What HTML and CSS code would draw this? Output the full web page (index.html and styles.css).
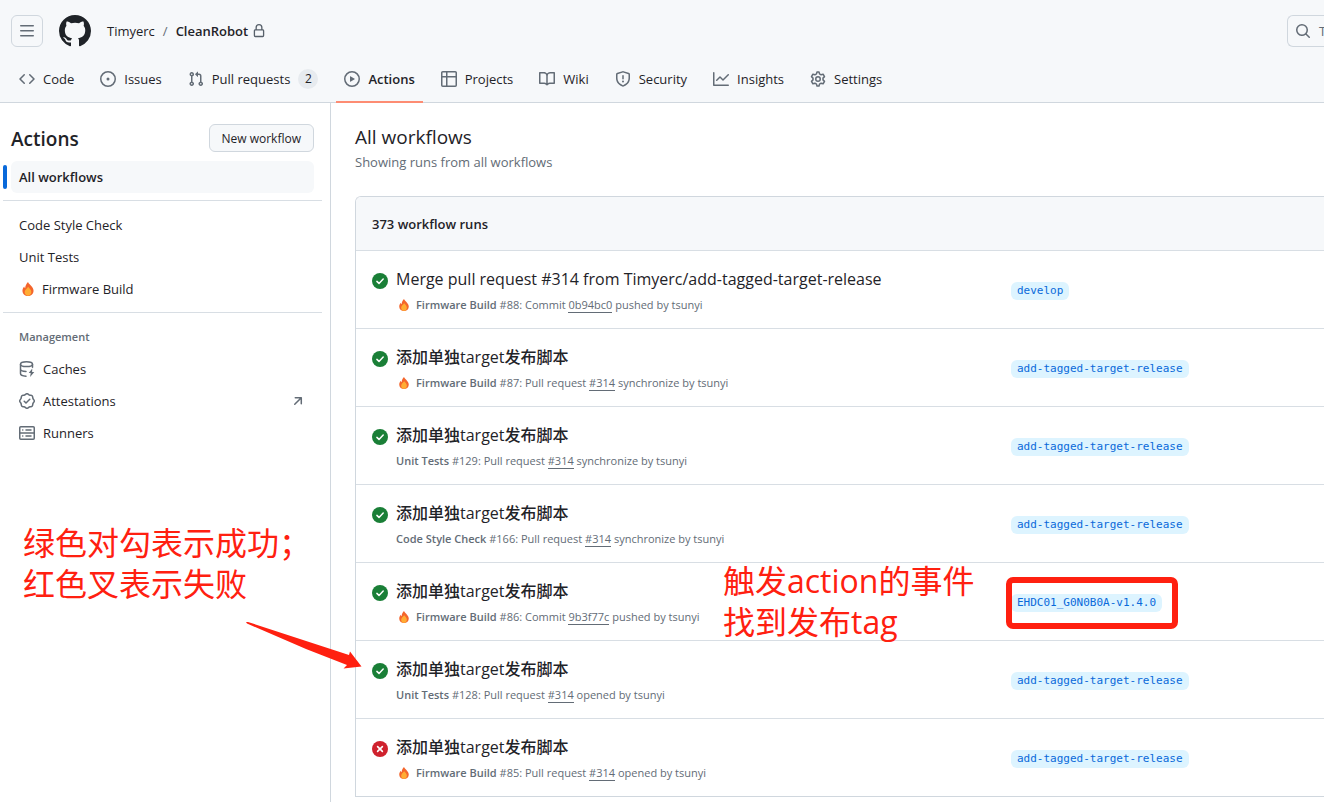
FILE: index.html
```html
<!DOCTYPE html>
<html lang="en">
<head>
<meta charset="utf-8">
<title>Actions · Timyerc/CleanRobot</title>
<link rel="stylesheet" href="styles.css">
</head>
<body>
<svg class="defs" aria-hidden="true">
  <symbol id="i-fire" viewBox="0 0 16 16"><path fill="#f4652c" d="M8 0c.6 2 3 3.200 4.500 5.500C14 7.600 14.500 9 14.300 10.500 14 13.700 11.400 16 8 16s-6-2.300-6.300-5.500C1.500 8.500 2.300 6.500 3.700 5c.1 1 .4 1.600 1 2C5 4 6.300 1.700 8 0z"/><path fill="#ffac33" d="M8.200 5.500c.8 1.500 3.600 3 3.600 6 0 2.400-1.600 4.200-3.800 4.200s-3.800-1.800-3.800-4.200c0-2.500 2.800-4 4-6z"/></symbol>
  <symbol id="i-ok" viewBox="0 0 16 16"><circle cx="8" cy="8" r="8" fill="#1a7f37"/><path d="M4.900 8.400 7 10.400 11.200 6.100" fill="none" stroke="#fff" stroke-width="1.500" stroke-linecap="round" stroke-linejoin="round"/></symbol>
  <symbol id="i-fail" viewBox="0 0 16 16"><circle cx="8" cy="8" r="8" fill="#cf222e"/><path d="m5.600 5.600 4.800 4.800m0-4.800-4.800 4.800" fill="none" stroke="#fff" stroke-width="1.600" stroke-linecap="round"/></symbol>
</svg>

<header class="header">
  <div class="topbar">
    <button class="menu" aria-label="Open menu"><svg class="icon" viewBox="0 0 16 16"><path d="M1 2.750A.75.75 0 0 1 1.750 2h12.500a.75.75 0 0 1 0 1.500H1.750A.75.75 0 0 1 1 2.750Zm0 5A.75.75 0 0 1 1.750 7h12.500a.75.75 0 0 1 0 1.500H1.750A.75.75 0 0 1 1 7.750ZM1.750 12h12.500a.75.75 0 0 1 0 1.500H1.750a.75.75 0 0 1 0-1.500Z"/></svg></button>
    <a class="logo" href="#" aria-label="Homepage"><svg viewBox="0 0 16 16" width="32" height="32"><path d="M8 0c4.420 0 8 3.580 8 8a8.013 8.013 0 0 1-5.450 7.590c-.4.080-.55-.17-.55-.38 0-.27.010-1.130.010-2.200 0-.75-.25-1.230-.54-1.480 1.780-.2 3.650-.88 3.650-3.950 0-.88-.31-1.590-.82-2.150.080-.2.360-1.020-.080-2.120 0 0-.67-.22-2.200.82-.64-.18-1.320-.27-2-.27-.68 0-1.360.090-2 .27-1.530-1.030-2.200-.82-2.200-.82-.44 1.100-.16 1.920-.080 2.120-.51.560-.82 1.280-.82 2.150 0 3.060 1.860 3.750 3.640 3.950-.23.2-.44.550-.51 1.070-.46.210-1.610.550-2.330-.66-.15-.24-.6-.83-1.230-.82-.67.010-.27.380.010.530.34.190.73.900.82 1.130.16.450.68 1.310 2.690.94 0 .67.010 1.300.010 1.490 0 .21-.15.450-.55.380A7.995 7.995 0 0 1 0 8c0-4.420 3.580-8 8-8Z"/></svg></a>
    <nav class="crumbs" aria-label="Repository"><a href="#">Timyerc</a><span class="slash">/</span><a class="repo" href="#">CleanRobot</a><svg class="lock" viewBox="0 0 16 16"><path d="M4 4a4 4 0 0 1 8 0v2h.25c.966 0 1.750.784 1.750 1.750v5.500A1.750 1.750 0 0 1 12.250 15h-8.500A1.750 1.750 0 0 1 2 13.250v-5.500C2 6.784 2.784 6 3.750 6H4Zm8.250 3.500h-8.500a.25.25 0 0 0-.25.25v5.500c0 .138.112.25.25.25h8.500a.25.25 0 0 0 .25-.25v-5.500a.25.25 0 0 0-.25-.25ZM10.500 6V4a2.500 2.500 0 1 0-5 0v2Z"/></svg></nav>
    <button class="search" aria-label="Search"><svg class="icon" viewBox="0 0 16 16"><path d="M10.680 11.740a6 6 0 0 1-7.922-8.982 6 6 0 0 1 8.982 7.922l3.040 3.040a.749.749 0 0 1-1.060 1.060ZM11.500 7a4.499 4.499 0 1 0-8.997 0A4.499 4.499 0 0 0 11.500 7Z"/></svg><span>T</span></button>
  </div>
  <nav class="tabs" aria-label="Repository sections">
    <a class="tab" href="#"><svg class="icon" viewBox="0 0 16 16"><path d="m11.280 3.220 4.250 4.250a.75.75 0 0 1 0 1.060l-4.250 4.250a.749.749 0 1 1-1.060-1.060L13.940 8l-3.720-3.720a.749.749 0 1 1 1.060-1.060Zm-6.560 0a.751.751 0 0 1 1.060 1.060L2.060 8l3.720 3.720a.749.749 0 1 1-1.060 1.060L.47 8.530a.75.75 0 0 1 0-1.060Z"/></svg>Code</a>
    <a class="tab" href="#"><svg class="icon" viewBox="0 0 16 16"><path d="M8 9.500a1.500 1.500 0 1 0 0-3 1.500 1.500 0 0 0 0 3Z"/><path d="M8 0a8 8 0 1 1 0 16A8 8 0 0 1 8 0ZM1.500 8a6.500 6.500 0 1 0 13 0 6.500 6.500 0 0 0-13 0Z"/></svg>Issues</a>
    <a class="tab" href="#"><svg class="icon" viewBox="0 0 16 16"><path d="M1.500 3.250a2.250 2.250 0 1 1 3 2.122v5.256a2.251 2.251 0 1 1-1.500 0V5.372A2.250 2.250 0 0 1 1.500 3.250Zm5.677-.177L9.573.677A.25.25 0 0 1 10 .854V2.500h1A2.500 2.500 0 0 1 13.500 5v5.628a2.251 2.251 0 1 1-1.500 0V5a1 1 0 0 0-1-1h-1v1.646a.25.25 0 0 1-.427.177L7.177 3.427a.25.25 0 0 1 0-.354ZM3.750 2.500a.75.75 0 1 0 0 1.500.75.75 0 0 0 0-1.500Zm0 9.500a.75.75 0 1 0 0 1.500.75.75 0 0 0 0-1.500Zm8.250.75a.75.75 0 1 0 1.500 0 .75.75 0 0 0-1.500 0Z"/></svg>Pull requests<span class="count">2</span></a>
    <a class="tab tab-active" href="#" aria-current="page"><svg class="icon" viewBox="0 0 16 16"><path d="M8 0a8 8 0 1 1 0 16A8 8 0 0 1 8 0ZM1.500 8a6.500 6.500 0 1 0 13 0 6.500 6.500 0 0 0-13 0Zm4.879-2.773 4.264 2.559a.25.25 0 0 1 0 .428l-4.264 2.559A.25.25 0 0 1 6 10.559V5.442a.25.25 0 0 1 .379-.215Z"/></svg>Actions</a>
    <a class="tab" href="#"><svg class="icon" viewBox="0 0 16 16"><path d="M0 1.750C0 .784.784 0 1.750 0h12.500C15.216 0 16 .784 16 1.750v12.500A1.750 1.750 0 0 1 14.250 16H1.750A1.750 1.750 0 0 1 0 14.250ZM6.500 6.500v8h7.750a.25.25 0 0 0 .25-.25V6.500Zm8-1.500V1.750a.25.25 0 0 0-.25-.25H6.500V5Zm-13 1.500v7.750c0 .138.112.25.25.25H5v-8ZM5 5V1.500H1.750a.25.25 0 0 0-.25.25V5Z"/></svg>Projects</a>
    <a class="tab" href="#"><svg class="icon" viewBox="0 0 16 16"><path d="M0 1.750A.75.75 0 0 1 .75 1h4.253c1.227 0 2.317.59 3 1.501A3.743 3.743 0 0 1 11.006 1h4.245a.75.75 0 0 1 .75.75v10.500a.75.75 0 0 1-.75.75h-4.507a2.250 2.250 0 0 0-1.591.659l-.622.621a.75.75 0 0 1-1.060 0l-.622-.621A2.250 2.250 0 0 0 5.258 13H.75a.75.75 0 0 1-.75-.75Zm7.251 10.324.004-5.073-.002-2.253A2.250 2.250 0 0 0 5.003 2.500H1.500v9h3.757a3.750 3.750 0 0 1 1.994.574ZM8.755 4.750l-.004 7.322a3.752 3.752 0 0 1 1.992-.572H14.500v-9h-3.495a2.250 2.250 0 0 0-2.250 2.250Z"/></svg>Wiki</a>
    <a class="tab" href="#"><svg class="icon" viewBox="0 0 16 16"><path d="M7.467.133a1.748 1.748 0 0 1 1.066 0l5.250 1.680A1.750 1.750 0 0 1 15 3.480V7c0 1.566-.32 3.182-1.303 4.682-.983 1.498-2.585 2.813-5.032 3.855a1.697 1.697 0 0 1-1.330 0c-2.447-1.042-4.049-2.357-5.032-3.855C1.320 10.182 1 8.566 1 7V3.480a1.755 1.755 0 0 1 1.217-1.667Zm.610 1.429a.25.25 0 0 0-.153 0l-5.250 1.680a.25.25 0 0 0-.174.238V7c0 1.358.275 2.666 1.057 3.860.784 1.194 2.121 2.340 4.366 3.297a.196.196 0 0 0 .154 0c2.245-.956 3.582-2.104 4.366-3.298C13.225 9.666 13.500 8.360 13.500 7V3.480a.251.251 0 0 0-.174-.237l-5.250-1.680ZM8.750 4.750v3a.75.75 0 0 1-1.500 0v-3a.75.75 0 0 1 1.500 0ZM9 10.500a1 1 0 1 1-2 0 1 1 0 0 1 2 0Z"/></svg>Security</a>
    <a class="tab" href="#"><svg class="icon" viewBox="0 0 16 16"><path d="M1.500 1.750V13.500h13.750a.75.75 0 0 1 0 1.500H.75a.75.75 0 0 1-.75-.75V1.750a.75.75 0 0 1 1.500 0Zm14.280 2.530-5.250 5.250a.75.75 0 0 1-1.060 0L7 7.060 4.280 9.780a.751.751 0 1 1-1.060-1.060l3.250-3.250a.75.75 0 0 1 1.060 0L10 7.940l4.720-4.720a.751.751 0 1 1 1.060 1.060Z"/></svg>Insights</a>
    <a class="tab" href="#"><svg class="icon" viewBox="0 0 16 16"><g fill="none" stroke="#636c76" stroke-width="1.500" stroke-linejoin="round"><circle cx="8" cy="8" r="2.250"/><path d="M7 .9h2l.5 2 1.600.9 2-.6 1.400 2.400-1.500 1.500v1.800l1.500 1.500-1.400 2.400-2-.6-1.600.9-.5 2H7l-.5-2-1.600-.9-2 .6-1.400-2.400L3 8.900V7.100L1.500 5.600l1.400-2.400 2 .6 1.600-.9z"/></g></svg>Settings</a>
  </nav>
</header>

<div class="layout">
  <aside class="sidebar">
    <div class="side-head"><h2>Actions</h2><button class="new">New workflow</button></div>
    <nav class="side-nav" aria-label="Workflows">
      <a class="item item-active" href="#" aria-current="page">All workflows</a>
      <hr>
      <a class="item" href="#">Code Style Check</a>
      <a class="item" href="#">Unit Tests</a>
      <a class="item" href="#"><svg class="fire fire-side"><use href="#i-fire"/></svg>Firmware Build</a>
      <hr>
      <h3>Management</h3>
      <a class="item" href="#"><svg class="icon" viewBox="0 0 16 16"><g fill="none" stroke="#636c76" stroke-width="1.500" stroke-linecap="round"><ellipse cx="7.500" cy="3.200" rx="6" ry="2.400"/><path d="M1.500 3.500v9c0 1.300 2 2.500 5.500 2.700M13.500 3.500v2.700M1.500 8c0 1.300 2 2.300 5.500 2.400"/></g><path d="M13.300 7.600 9.700 12h2l-.6 4 4.200-5h-2.200z"/></svg>Caches</a>
      <a class="item" href="#"><svg class="icon" viewBox="0 0 16 16"><path d="m9.585.52.929.68c.153.112.331.186.518.215l1.138.175a2.678 2.678 0 0 1 2.240 2.240l.174 1.139c.29.187.103.365.215.518l.68.928a2.677 2.677 0 0 1 0 3.170l-.68.928a1.174 1.174 0 0 0-.215.518l-.175 1.138a2.678 2.678 0 0 1-2.241 2.241l-1.138.175a1.170 1.170 0 0 0-.518.215l-.928.680a2.677 2.677 0 0 1-3.170 0l-.928-.68a1.174 1.174 0 0 0-.518-.215L3.830 14.410a2.678 2.678 0 0 1-2.240-2.240l-.175-1.138a1.170 1.170 0 0 0-.215-.518l-.68-.928a2.677 2.677 0 0 1 0-3.170l.68-.928c.112-.153.186-.331.215-.518l.175-1.140a2.678 2.678 0 0 1 2.240-2.240l1.139-.175c.187-.29.365-.103.518-.215l.928-.68a2.677 2.677 0 0 1 3.170 0ZM7.303 1.728l-.927.680a2.670 2.670 0 0 1-1.180.489l-1.137.174a1.179 1.179 0 0 0-.987.987l-.174 1.136a2.677 2.677 0 0 1-.489 1.180l-.68.928a1.180 1.180 0 0 0 0 1.394l.68.927c.256.348.424.753.489 1.180l.174 1.137c.078.509.478.909.987.987l1.136.174a2.670 2.670 0 0 1 1.180.489l.928.680c.414.305.979.305 1.394 0l.927-.68a2.670 2.670 0 0 1 1.180-.489l1.137-.174a1.180 1.180 0 0 0 .987-.987l.174-1.136a2.670 2.670 0 0 1 .489-1.180l.680-.928a1.176 1.176 0 0 0 0-1.394l-.68-.927a2.686 2.686 0 0 1-.489-1.180l-.174-1.137a1.179 1.179 0 0 0-.987-.987l-1.136-.174a2.677 2.677 0 0 1-1.180-.489l-.928-.68a1.176 1.176 0 0 0-1.394 0ZM11.280 6.780l-3.750 3.750a.75.75 0 0 1-1.060 0L4.720 8.780a.751.751 0 1 1 1.060-1.060L7 8.940l3.220-3.220a.751.751 0 1 1 1.060 1.060Z"/></svg>Attestations<svg class="icon ext" viewBox="0 0 16 16"><path d="M4.530 4.750A.75.75 0 0 1 5.280 4h6.010a.75.75 0 0 1 .75.75v6.010a.75.75 0 0 1-1.500 0v-4.200l-5.260 5.261a.749.749 0 1 1-1.060-1.060L9.480 5.500h-4.200a.75.75 0 0 1-.75-.75Z"/></svg></a>
      <a class="item" href="#"><svg class="icon" viewBox="0 0 16 16"><g fill="none" stroke="#636c76" stroke-width="1.500" stroke-linecap="round"><rect x=".75" y="1.750" width="14.500" height="12.500" rx="1"/><path d="M.75 8h14.500M3.700 5h.1M3.700 11h.1M7 5h5M7 11h5"/></g></svg>Runners</a>
    </nav>
  </aside>

  <main class="main">
    <h1>All workflows</h1>
    <p class="lead">Showing runs from all workflows</p>
    <section class="panel">
      <div class="panel-head">373 workflow runs</div>
      <article class="run"><svg class="status" role="img" aria-label="Success"><use href="#i-ok"/></svg><div><a class="title" href="#">Merge pull request #314 from Timyerc/add-tagged-target-release</a><p class="meta"><svg class="fire"><use href="#i-fire"/></svg><span><b>Firmware Build</b> #88: Commit <a href="#">0b94bc0</a> pushed by tsunyi</span></p></div><div class="branch"><a href="#">develop</a></div></article>
      <article class="run"><svg class="status" role="img" aria-label="Success"><use href="#i-ok"/></svg><div><a class="title" href="#">添加单独target发布脚本</a><p class="meta"><svg class="fire"><use href="#i-fire"/></svg><span><b>Firmware Build</b> #87: Pull request <a href="#">#314</a> synchronize by tsunyi</span></p></div><div class="branch"><a href="#">add-tagged-target-release</a></div></article>
      <article class="run"><svg class="status" role="img" aria-label="Success"><use href="#i-ok"/></svg><div><a class="title" href="#">添加单独target发布脚本</a><p class="meta"><span><b>Unit Tests</b> #129: Pull request <a href="#">#314</a> synchronize by tsunyi</span></p></div><div class="branch"><a href="#">add-tagged-target-release</a></div></article>
      <article class="run"><svg class="status" role="img" aria-label="Success"><use href="#i-ok"/></svg><div><a class="title" href="#">添加单独target发布脚本</a><p class="meta"><span><b>Code Style Check</b> #166: Pull request <a href="#">#314</a> synchronize by tsunyi</span></p></div><div class="branch"><a href="#">add-tagged-target-release</a></div></article>
      <article class="run"><svg class="status" role="img" aria-label="Success"><use href="#i-ok"/></svg><div><a class="title" href="#">添加单独target发布脚本</a><p class="meta"><svg class="fire"><use href="#i-fire"/></svg><span><b>Firmware Build</b> #86: Commit <a href="#">9b3f77c</a> pushed by tsunyi</span></p></div><div class="branch"><a href="#">EHDC01_G0N0B0A-v1.4.0</a></div></article>
      <article class="run"><svg class="status" role="img" aria-label="Success"><use href="#i-ok"/></svg><div><a class="title" href="#">添加单独target发布脚本</a><p class="meta"><span><b>Unit Tests</b> #128: Pull request <a href="#">#314</a> opened by tsunyi</span></p></div><div class="branch"><a href="#">add-tagged-target-release</a></div></article>
      <article class="run"><svg class="status" role="img" aria-label="Failed"><use href="#i-fail"/></svg><div><a class="title" href="#">添加单独target发布脚本</a><p class="meta"><svg class="fire"><use href="#i-fire"/></svg><span><b>Firmware Build</b> #85: Pull request <a href="#">#314</a> opened by tsunyi</span></p></div><div class="branch"><a href="#">add-tagged-target-release</a></div></article>
    </section>
  </main>
</div>

<div class="note note-status" lang="zh-CN">绿色对勾表示成功；<br>红色叉表示失败</div>
<div class="note note-event" lang="zh-CN">触发action的事件<br>找到发布tag</div>
<svg class="arrow" viewBox="0 0 116 50" aria-hidden="true"><path fill="#ff2010" d="M0 0 2 0 103 33 104 29.500 115.500 44.500 97.500 46.500 101 43 60 27 1 1.500z"/></svg>
<div class="frame"></div>
</body>
</html>
```

FILE: styles.css
```css
* { box-sizing: border-box; }
body {
  margin: 0;
  min-height: 100vh;
  display: flex;
  flex-direction: column;
  position: relative;
  overflow-x: hidden;
  background: #fff;
  color: #1f2328;
  font: 13px/20px "Open Sans", "Noto Sans CJK SC", sans-serif;
}
h1, h2, h3, p { margin: 0; }
a { color: inherit; text-decoration: none; }
button { font: inherit; color: inherit; cursor: pointer; }
.defs { position: absolute; width: 0; height: 0; }
.icon { width: 16px; height: 16px; flex: none; fill: #636c76; }

.header { background: #f6f8fa; border-bottom: 1px solid #d0d7de; }
.topbar { display: flex; align-items: center; padding: 15px 0 8px 11px; }
.menu {
  display: grid;
  place-items: center;
  width: 32px;
  height: 32px;
  padding: 0;
  margin-right: 16px;
  border: 1px solid #d0d7de;
  border-radius: 6px;
  background: none;
}
.logo { display: flex; fill: #1f2328; }
.crumbs { display: flex; align-items: center; margin-left: 16px; }
.slash { padding: 0 8px; color: #636c76; }
.repo { font-weight: 600; }
.lock { width: 14px; height: 14px; margin-left: 4px; fill: #57606a; }
.search {
  display: flex;
  align-items: center;
  gap: 8px;
  width: 37px;
  height: 32px;
  margin-left: auto;
  padding: 0 0 0 7px;
  overflow: hidden;
  border: 1px solid #d0d7de;
  border-right: 0;
  border-radius: 6px 0 0 6px;
  background: none;
  color: #636c76;
}
.tabs { display: flex; gap: 10px; padding-left: 11px; }
.tab {
  display: flex;
  align-items: center;
  gap: 8px;
  height: 48px;
  padding: 2px 8px 0;
  margin-bottom: -1px;
  border-bottom: 2px solid transparent;
}
.tab-active { border-color: #fd8c73; font-weight: 600; }
.count {
  min-width: 20px;
  padding: 0 6px;
  border-radius: 10px;
  background: #e7ebef;
  font-size: 12px;
  text-align: center;
}

.layout { display: flex; flex: 1; }
.sidebar { flex: none; width: 331px; padding: 21px 16px 0 11px; border-right: 1px solid #d0d7de; }
.side-head { display: flex; align-items: center; justify-content: space-between; margin-bottom: 9px; }
.side-head h2 { padding-top: 2px; font-size: 19px; line-height: 26px; font-weight: 600; }
.new {
  height: 28px;
  padding: 1px 12px 0;
  border: 1px solid #d0d7de;
  border-radius: 6px;
  background: #f6f8fa;
  font-size: 12px;
  font-weight: 500;
}
.side-nav { display: flex; flex-direction: column; }
.item {
  position: relative;
  display: flex;
  align-items: center;
  gap: 8px;
  height: 32px;
  padding: 0 8px;
  border-radius: 6px;
}
.item-active { background: #f6f8fa; font-weight: 600; }
.item-active::before {
  content: "";
  position: absolute;
  left: -8px;
  top: 4px;
  width: 4px;
  height: 24px;
  border-radius: 6px;
  background: #0969da;
}
.side-nav hr { width: auto; height: 1px; margin: 7px -8px 8px; border: 0; background: #d8dee4; }
.side-nav h3 { padding: 6px 8px; font-size: 11px; line-height: 20px; font-weight: 600; color: #636c76; }
.ext { margin-left: auto; }
.fire { width: 12px; height: 12px; flex: none; margin: 0 0 0 2px; }
.fire-side { width: 14px; height: 14px; margin: 0 -1px 0 2px; }

.main { flex: 1; min-width: 0; padding: 20px 0 0 24px; }
.main h1 { font-size: 19px; line-height: 29px; font-weight: 400; }
.lead { line-height: 20px; margin-bottom: 24px; color: #636c76; }
.panel { border: 1px solid #d0d7de; border-width: 1px 0 1px 1px; border-radius: 6px 0 0 0; overflow: hidden; }
.panel-head { padding: 17px 16px 16px; background: #f6f8fa; font-weight: 600; }
.run {
  display: grid;
  grid-template-columns: 16px minmax(0, 1fr) 313px;
  gap: 0 8px;
  height: 78px;
  padding: 16px 0 0 16px;
  border-top: 1px solid #d8dee4;
}
.status { width: 16px; height: 16px; margin-top: 6px; }
.title { display: block; font-size: 16px; line-height: 24px; font-weight: 500; }
.meta { display: flex; align-items: center; gap: 6px; padding-top: 2px; font-size: 11px; line-height: 24px; color: #636c76; }
.meta b { font-weight: 600; }
.meta a { border-bottom: 1px solid #636c76; }
.branch { padding-top: 12px; }
.branch a {
  display: inline-block;
  padding: 0 6px;
  border-radius: 6px;
  background: #ddf4ff;
  color: #0969da;
  font: 11px/18px "DejaVu Sans Mono", monospace;
}

.note { position: absolute; color: #ff2010; font-size: 32px; line-height: 41px; white-space: nowrap; }
.note-status { left: 23px; top: 522px; }
.note-event { left: 723px; top: 560px; }
.arrow { position: absolute; left: 246px; top: 622px; width: 116px; height: 50px; }
.frame { position: absolute; left: 1006px; top: 577px; width: 172px; height: 52px; border: 6px solid #ff2010; border-radius: 7px; }
```
